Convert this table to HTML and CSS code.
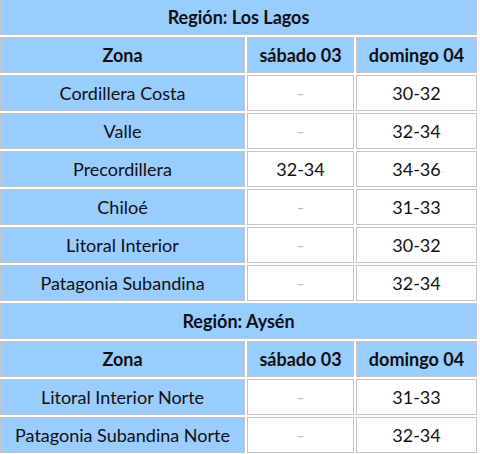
FILE: index.html
```html
<!DOCTYPE html>
<html lang="es">
<head>
<meta charset="utf-8">
<title>Pronóstico</title>
<link rel="stylesheet" href="styles.css">
</head>
<body>
<table class="forecast">
  <colgroup>
    <col class="c-zona">
    <col class="c-day1">
    <col class="c-day2">
  </colgroup>
  <tbody>
    <tr><th class="region" colspan="3">Región: Los Lagos</th></tr>
    <tr><th>Zona</th><th>sábado 03</th><th>domingo 04</th></tr>
    <tr><td class="zone">Cordillera Costa</td><td class="empty">-</td><td>30-32</td></tr>
    <tr><td class="zone">Valle</td><td class="empty">-</td><td>32-34</td></tr>
    <tr><td class="zone">Precordillera</td><td>32-34</td><td>34-36</td></tr>
    <tr><td class="zone">Chiloé</td><td class="empty">-</td><td>31-33</td></tr>
    <tr><td class="zone">Litoral Interior</td><td class="empty">-</td><td>30-32</td></tr>
    <tr><td class="zone">Patagonia Subandina</td><td class="empty">-</td><td>32-34</td></tr>
    <tr><th class="region" colspan="3">Región: Aysén</th></tr>
    <tr><th>Zona</th><th>sábado 03</th><th>domingo 04</th></tr>
    <tr><td class="zone">Litoral Interior Norte</td><td class="empty">-</td><td>31-33</td></tr>
    <tr><td class="zone">Patagonia Subandina Norte</td><td class="empty">-</td><td>32-34</td></tr>
  </tbody>
</table>
</body>
</html>
```

FILE: styles.css
```css
html, body {
  margin: 0;
  padding: 0;
  background: #ffffff;
}

body {
  font-family: Lato, "Open Sans", sans-serif;
  color: #111111;
  overflow: hidden;
}

.forecast {
  border-collapse: separate;
  border-spacing: 2px;
  table-layout: fixed;
  width: 481px;
  margin: -3px 0 0 -2px;
}

.c-zona { width: 245px; }
.c-day1 { width: 107px; }
.c-day2 { width: 121px; }

.forecast th,
.forecast td {
  border: 1px solid #c4c4c4;
  padding: 0;
  line-height: 34px;
  font-size: 18px;
  text-align: center;
  white-space: nowrap;
  background: #ffffff;
}

.forecast th {
  background: #99ccff;
  font-weight: 700;
}

.forecast td.zone {
  background: #99ccff;
}

.forecast td.empty {
  color: #b8b8b8;
}
```
